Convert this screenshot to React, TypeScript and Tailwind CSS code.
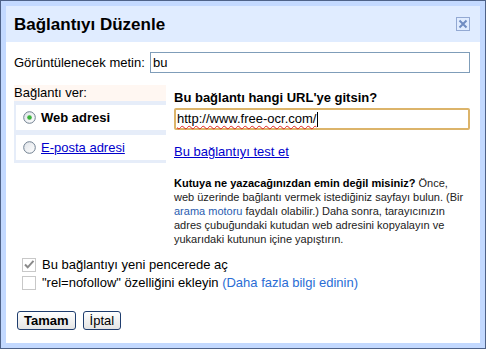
import React from "react";

const font = { fontFamily: '"Liberation Sans", Arial, sans-serif' };

function Radio({ checked }: { checked?: boolean }) {
  return (
    <svg width="13" height="13" viewBox="0 0 13 13" className="shrink-0">
      <defs>
        <linearGradient id={checked ? "rg1" : "rg2"} x1="0" y1="0" x2="1" y2="1">
          <stop offset="0" stopColor="#dfe3e8" />
          <stop offset="1" stopColor="#ffffff" />
        </linearGradient>
      </defs>
      <circle cx="6.5" cy="6.5" r="5.8" fill={`url(#${checked ? "rg1" : "rg2"})`} stroke="#6f7f90" strokeWidth="1" />
      {checked && <circle cx="6.5" cy="6.5" r="2.3" fill="#3bb33b" />}
    </svg>
  );
}

function Check({ checked }: { checked?: boolean }) {
  return (
    <svg width="14" height="14" viewBox="0 0 14 14" className="shrink-0">
      <rect x="0.5" y="0.5" width="13" height="13" fill="#fff" stroke="#c8c8c8" />
      {checked && (
        <path d="M3 6.5 L5.7 9.3 L11.5 2.8" fill="none" stroke="#8a8a8a" strokeWidth="2" />
      )}
    </svg>
  );
}

export default function App() {
  return (
    <div className="w-[487px] h-[349px] bg-white" style={font}>
      <div className="w-[486px] border border-[#4e6288]">
        <div className="border-[5px] border-[#c3d9ff] bg-white">
          <div className="h-[36px] bg-[#e0ecff] flex items-center justify-between pl-[8px] pr-[10px]">
            <span className="text-[17px] font-bold text-black leading-none pt-[1px]">Bağlantıyı Düzenle</span>
            <div className="w-[14px] h-[14px] border border-[#93a9d3] flex items-center justify-center">
              <svg width="10" height="10" viewBox="0 0 10 10">
                <path d="M1.5 1.5 L8.5 8.5 M8.5 1.5 L1.5 8.5" stroke="#6f8cc2" strokeWidth="2" />
              </svg>
            </div>
          </div>
          <div className="pl-[8px] pr-[10px] pt-[10px] pb-[13px] text-[13px] text-black">
            <div className="flex items-center h-[21px]">
              <span className="w-[136px] shrink-0">Görüntülenecek metin:</span>
              <div className="flex-1 h-[21px] border border-[#7f9db9] flex items-center pl-[2px] pt-[1px]">bu</div>
            </div>
            <div className="flex mt-[12px]">
              <div className="w-[152px] shrink-0">
                <div className="h-[16px] leading-[16px] bg-[#fff7f2]">Bağlantı ver:</div>
                <div className="bg-[#e6edf9] pl-[2px] pt-[4px] pb-[3px] flex flex-col gap-[5px]">
                  <div className="h-[25px] bg-white flex items-center pl-[7px] gap-[5px]">
                    <Radio checked />
                    <span className="font-bold">Web adresi</span>
                  </div>
                  <div className="h-[25px] bg-white flex items-center pl-[7px] gap-[5px]">
                    <Radio />
                    <span className="text-[#0000cc] underline">E-posta adresi</span>
                  </div>
                </div>
              </div>
              <div className="flex-1 ml-[8px]">
                <div className="mt-[5px] leading-[16px] font-bold">Bu bağlantı hangi URL'ye gitsin?</div>
                <div className="mt-[2px] h-[22px] border-2 border-[#dcb46a] rounded-[2px] flex items-center pl-[1px]">
                  <span className="underline decoration-wavy decoration-[#e02020] decoration-1 underline-offset-[2px]">http://www.free-ocr.com/</span>
                  <span className="w-px h-[15px] bg-black ml-[1px]" />
                </div>
                <div className="mt-[14px] leading-[16px]">
                  <span className="text-[#0000cc] underline">Bu bağlantıyı test et</span>
                </div>
                <p className="mt-[16px] text-[11px] leading-[14px] text-[#222] w-[290px]">
                  <b className="text-black">Kutuya ne yazacağınızdan emin değil misiniz?</b> Önce, web üzerinde bağlantı vermek istediğiniz sayfayı bulun. (Bir{" "}
                  <span className="text-[#2a5db0]">arama motoru</span> faydalı olabilir.) Daha sonra, tarayıcınızın adres çubuğundaki kutudan web adresini kopyalayın ve yukarıdaki kutunun içine yapıştırın.
                </p>
              </div>
            </div>
            <div className="mt-[10px] pl-[8px] flex flex-col">
              <div className="h-[18px] flex items-center gap-[6px]">
                <Check checked />
                <span>Bu bağlantıyı yeni pencerede aç</span>
              </div>
              <div className="h-[18px] flex items-center gap-[6px]">
                <Check />
                <span>"rel=nofollow" özelliğini ekleyin <span className="text-[#2a6dd5]">(Daha fazla bilgi edinin)</span></span>
              </div>
            </div>
            <div className="mt-[19px] flex gap-[7px] pl-[3px]">
              <button className="h-[19px] px-[6px] border border-[#1f3d6e] rounded-[3px] bg-gradient-to-b from-white to-[#e4e4e4] text-[13px] font-bold leading-none text-black">Tamam</button>
              <button className="h-[19px] px-[6px] border border-[#1f3d6e] rounded-[3px] bg-gradient-to-b from-white to-[#e4e4e4] text-[13px] leading-none text-black">İptal</button>
            </div>
          </div>
        </div>
      </div>
    </div>
  );
}
